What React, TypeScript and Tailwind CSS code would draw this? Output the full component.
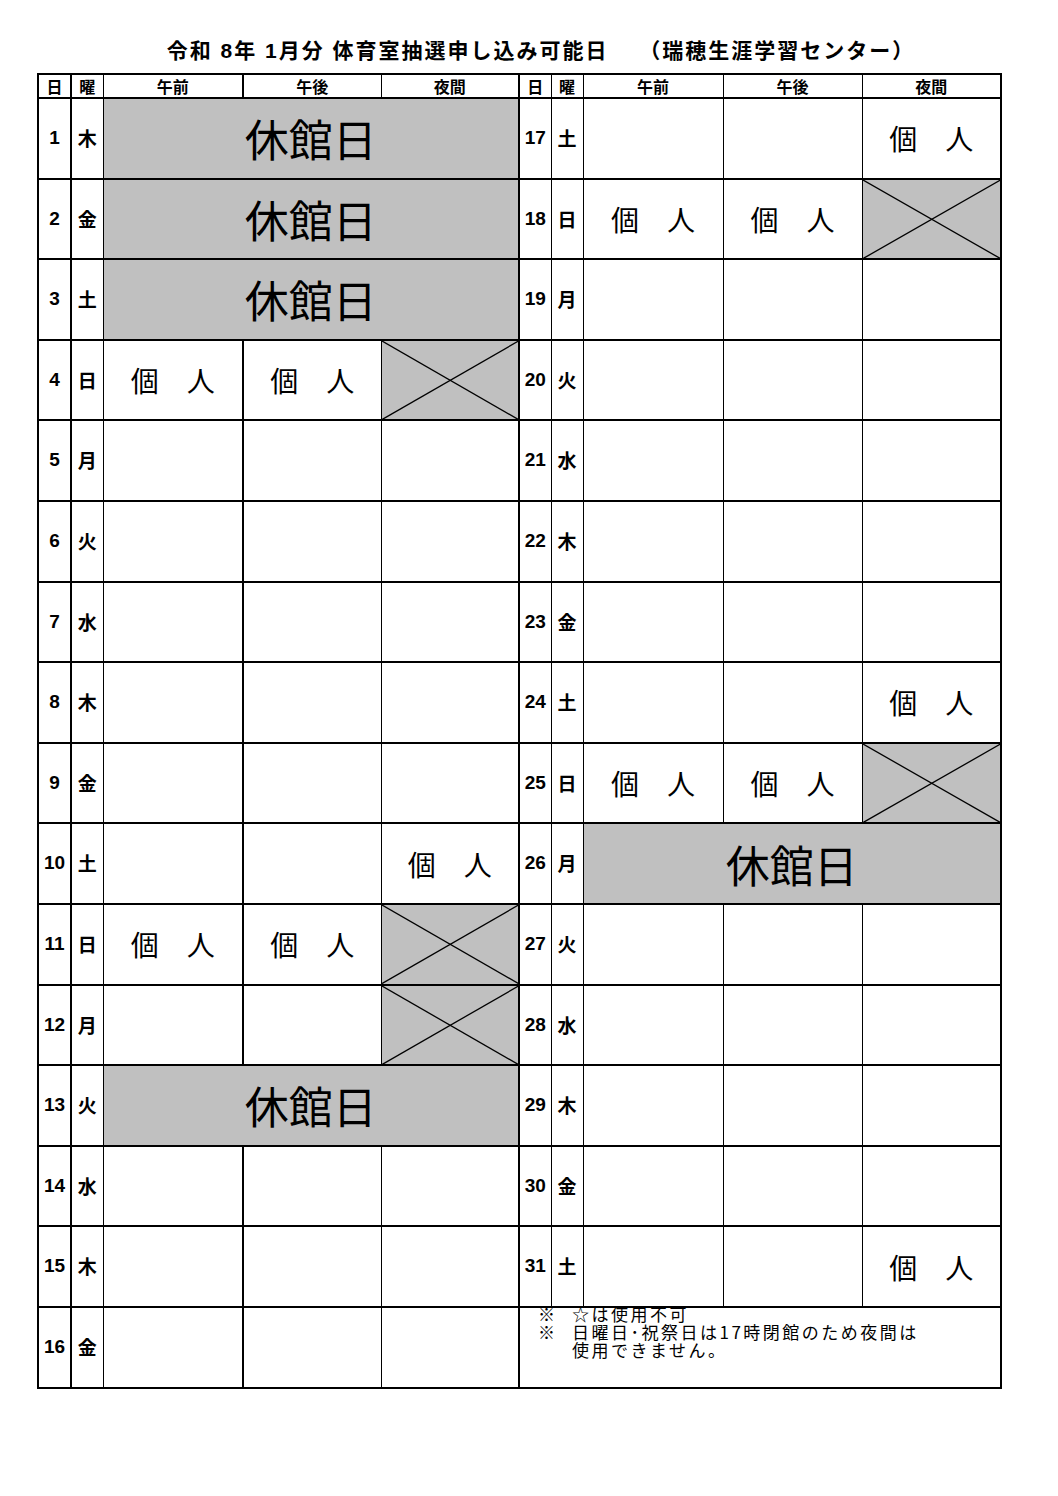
import React from 'react';

// 1 slot = '' (空き) | 'p' (個人) | 'x' (使用不可)
type Slot = '' | 'p' | 'x';
type Day = { d: number; w: string; closed?: boolean; s?: [Slot, Slot, Slot] };

const jp = { fontFamily: '"Noto Sans CJK JP", sans-serif' };
const num = { fontFamily: '"Liberation Sans", "Noto Sans CJK JP", sans-serif' };

const left: Day[] = [
  { d: 1, w: '木', closed: true },
  { d: 2, w: '金', closed: true },
  { d: 3, w: '土', closed: true },
  { d: 4, w: '日', s: ['p', 'p', 'x'] },
  { d: 5, w: '月' },
  { d: 6, w: '火' },
  { d: 7, w: '水' },
  { d: 8, w: '木' },
  { d: 9, w: '金' },
  { d: 10, w: '土', s: ['', '', 'p'] },
  { d: 11, w: '日', s: ['p', 'p', 'x'] },
  { d: 12, w: '月', s: ['', '', 'x'] },
  { d: 13, w: '火', closed: true },
  { d: 14, w: '水' },
  { d: 15, w: '木' },
  { d: 16, w: '金' },
];

const right: (Day | null)[] = [
  { d: 17, w: '土', s: ['', '', 'p'] },
  { d: 18, w: '日', s: ['p', 'p', 'x'] },
  { d: 19, w: '月' },
  { d: 20, w: '火' },
  { d: 21, w: '水' },
  { d: 22, w: '木' },
  { d: 23, w: '金' },
  { d: 24, w: '土', s: ['', '', 'p'] },
  { d: 25, w: '日', s: ['p', 'p', 'x'] },
  { d: 26, w: '月', closed: true },
  { d: 27, w: '火' },
  { d: 28, w: '水' },
  { d: 29, w: '木' },
  { d: 30, w: '金' },
  { d: 31, w: '土', s: ['', '', 'p'] },
  null,
];

function SlotCell({ v, cls }: { v: Slot; cls: string }) {
  if (v === 'x') {
    return (
      <td className={`relative p-0 bg-[#c0c0c0] ${cls}`}>
        <svg className="absolute inset-0 w-full h-full" preserveAspectRatio="none" viewBox="0 0 100 100">
          <line x1="0" y1="0" x2="100" y2="100" stroke="#000" strokeWidth="1.3" vectorEffect="non-scaling-stroke" />
          <line x1="0" y1="100" x2="100" y2="0" stroke="#000" strokeWidth="1.3" vectorEffect="non-scaling-stroke" />
        </svg>
      </td>
    );
  }
  return (
    <td className={`p-0 text-center text-[28px] leading-none text-black ${cls}`} style={jp}>
      {v === 'p' ? '個　人' : ''}
    </td>
  );
}

function DayCells({ day, side }: { day: Day; side: 'l' | 'r' }) {
  const mid = side === 'l' ? 'border-r-2' : 'border-r';
  const last = side === 'l' ? 'border-r-2' : '';
  const s = day.s ?? ['', '', ''];
  return (
    <>
      <td className={`p-0 text-center text-[19px] font-bold ${side === 'l' ? 'border-r-2' : 'border-r'} border-black`} style={num}>
        {day.d}
      </td>
      <td className="p-0 text-center text-[19px] font-bold border-r border-black" style={jp}>
        {day.w}
      </td>
      {day.closed ? (
        <td colSpan={3} className={`p-0 bg-[#c0c0c0] text-center text-[44px] leading-none ${last} border-black`} style={jp}>
          休館日
        </td>
      ) : (
        <>
          <SlotCell v={s[0]} cls={`${mid} border-black`} />
          <SlotCell v={s[1]} cls="border-r border-black" />
          <SlotCell v={s[2]} cls={`${last} border-black`} />
        </>
      )}
    </>
  );
}

function Header() {
  const th = 'p-0 text-center text-[16px] font-bold leading-none border-black';
  return (
    <tr className="h-[24px] border-b-2 border-black" style={jp}>
      <th className={`${th} border-r-2`}>日</th>
      <th className={`${th} border-r`}>曜</th>
      <th className={`${th} border-r-2`}>午前</th>
      <th className={`${th} border-r`}>午後</th>
      <th className={`${th} border-r-2`}>夜間</th>
      <th className={`${th} border-r`}>日</th>
      <th className={`${th} border-r`}>曜</th>
      <th className={`${th} border-r`}>午前</th>
      <th className={`${th} border-r`}>午後</th>
      <th className={th}>夜間</th>
    </tr>
  );
}

export default function App() {
  return (
    <div className="w-[1058px] h-[1496px] bg-white text-black">
      <div className="h-[73px] pt-[38px] pl-[24px] text-center text-[21px] font-bold leading-[26px] tracking-[2px]" style={num}>
        令和 8年 1月分 体育室抽選申し込み可能日　 （瑞穂生涯学習センター）
      </div>
      <table className="ml-[37px] w-[965px] table-fixed border-collapse border-2 border-black">
        <colgroup>
          <col className="w-[33px]" />
          <col className="w-[32px]" />
          <col className="w-[140px]" />
          <col className="w-[138px]" />
          <col className="w-[138px]" />
          <col className="w-[32px]" />
          <col className="w-[32px]" />
          <col className="w-[140px]" />
          <col className="w-[139px]" />
          <col className="w-[139px]" />
        </colgroup>
        <thead>
          <Header />
        </thead>
        <tbody>
          {left.map((l, i) => {
            const r = right[i];
            return (
              <tr key={l.d} className="h-[80.6px] border-b-2 border-black">
                <DayCells day={l} side="l" />
                {r ? (
                  <DayCells day={r} side="r" />
                ) : (
                  <td colSpan={5} className="p-0 pl-[18px] align-top text-[17px] leading-[18px] tracking-[2.5px]" style={jp}>
                    <div className="grid grid-cols-[34px_1fr] -mt-[3px]">
                      <span>※</span>
                      <span>☆は使用不可</span>
                      <span>※</span>
                      <span>
                        日曜日･祝祭日は17時閉館のため夜間は
                        <br />
                        使用できません。
                      </span>
                    </div>
                  </td>
                )}
              </tr>
            );
          })}
        </tbody>
      </table>
    </div>
  );
}
